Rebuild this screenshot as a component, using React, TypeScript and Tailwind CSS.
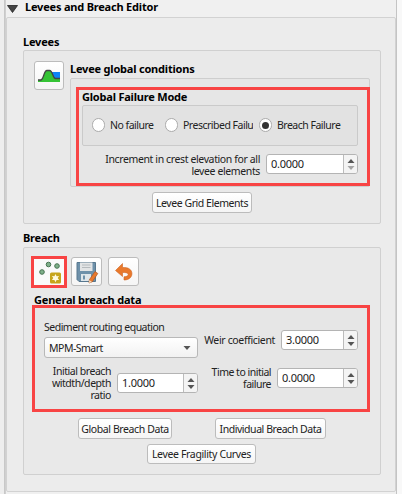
import type { ReactNode } from "react";

function Spin({ value, className, dimDown = false }: { value: string; className: string; dimDown?: boolean }) {
  return (
    <div className={`flex h-[20px] shrink-0 overflow-hidden rounded-[3px] border border-[#b4b4b4] bg-white text-[11px] ${className}`}>
      <span className="flex-1 pl-[4px] leading-[18px] tracking-[-0.25px]">{value}</span>
      <span className="flex w-[14px] flex-col items-center justify-center gap-[3px] border-l border-[#bcbcbc] bg-[#f4f4f4]">
        <svg width="8" height="4" viewBox="0 0 8 4"><path d="M0.5 4 4 0 7.5 4Z" fill="#555" /></svg>
        <svg width="8" height="4" viewBox="0 0 8 4"><path d="M0.5 0 4 4 7.5 0Z" fill={dimDown ? "#a5a5a5" : "#555"} /></svg>
      </span>
    </div>
  );
}

function Button({ children, className }: { children: ReactNode; className: string }) {
  return (
    <button className={`flex shrink-0 items-center justify-center rounded-[3px] border border-[#bcbcbc] bg-gradient-to-b from-white to-[#f5f5f5] ${className}`}>
      {children}
    </button>
  );
}

function Radio({ label, checked = false, className }: { label: string; checked?: boolean; className: string }) {
  return (
    <label className={`flex items-center gap-[5px] overflow-hidden ${className}`}>
      <span className="flex h-[14px] w-[13px] shrink-0 items-center justify-center rounded-full border border-[#aaa] bg-white">
        {checked && <span className="h-[7px] w-[7px] rounded-full bg-[#333]" />}
      </span>
      {label}
    </label>
  );
}

function LeveeIcon() {
  return (
    <svg width="24" height="14" viewBox="0 0 24 14">
      <path d="M14 3H23V10H17Z" fill="#0d83f5" />
      <path d="M1 13V11H4C7 11 6.500 1.500 10 1.500H12.500C16 1.500 15.500 9.500 18.500 9.500H23V13Z" fill="#35c335" />
      <path d="M1 11H3.500C7 11 6.500 1.500 10 1.500H12.500C16 1.500 15.500 9.500 18.500 9.500H23" fill="none" stroke="#444" strokeWidth="1.3" />
    </svg>
  );
}

function PointsIcon() {
  return (
    <svg width="30" height="26" viewBox="0 0 30 26" className="shrink-0">
      <g fill="#7fb08a" stroke="#477351" strokeWidth="1">
        <circle cx="8" cy="13" r="2.3" />
        <circle cx="14.5" cy="5.500" r="2.3" />
        <circle cx="23" cy="7" r="2.3" />
      </g>
      <rect x="16" y="13.500" width="11" height="11" rx="1.5" fill="#c7a51b" />
      <path d="m21.5 15 1.1 2.3 2.5-.3-1.4 2 1.4 2.1-2.5-.2-1.1 2.3-1.1-2.3-2.5.2 1.4-2.1-1.4-2 2.5.3Z" fill="#fffbe0" />
    </svg>
  );
}

function SaveIcon() {
  return (
    <svg width="24" height="24" viewBox="0 0 24 24">
      <path d="M2 2.5H20.500V21.500H4L2 19.500Z" fill="#6e91aa" stroke="#58788f" />
      <rect x="5" y="2.500" width="12.500" height="8.500" fill="#e2e4e5" />
      <path d="M7 5H15.500M7 7.500H15.500" stroke="#b5babd" />
      <rect x="6" y="14" width="10" height="7" fill="#dfe6ea" />
      <rect x="8" y="15.500" width="2" height="4" fill="#6e91aa" />
      <path d="M20 11.500 22.800 13.500 17.300 21.800 14 23 14.300 19.800Z" fill="#e9792c" stroke="#a9572a" strokeWidth=".7" />
      <path d="m14.300 20 2.700 1.900-3 1.200Z" fill="#f3ddc1" />
    </svg>
  );
}

function UndoIcon() {
  return (
    <svg width="20" height="20" viewBox="0 0 20 20">
      <path d="M1.500 8.500 8.500 1.500V5.500H10.500C20.500 5.500 20.500 18 10 18V14.800C15.500 14.800 15.500 10.500 10.500 10.500H8.500V14.500Z" fill="#e9792c" stroke="#ce6523" strokeWidth=".6" />
    </svg>
  );
}

export default function App() {
  return (
    <main className="flex h-[494px] w-[402px] overflow-hidden bg-[#f0f0f0] font-['Noto_Sans','Open_Sans',sans-serif] text-[10.5px] leading-[12px] tracking-[-0.5px] whitespace-nowrap text-[#222]">
      <div className="w-[6px] shrink-0 border-r border-[#d0d0d0] bg-[#eee] pl-[4px]">
        <div className="h-full w-px bg-[#c8c8c8]" />
      </div>
      <section className="w-[391px] shrink-0 border-r border-[#c4c4c4]">
        <h1 className="flex h-[17px] items-center pl-[1px] text-[11px] font-bold tracking-[-0.2px] text-black">
          <svg width="11" height="8" viewBox="0 0 11 8" className="mt-px mr-[7px]"><path d="M.5 .5H10.500L5.500 7.500Z" fill="#444" stroke="#222" strokeWidth=".8" /></svg>
          <span className="-mt-[3px]">Levees and Breach Editor</span>
        </h1>
        <div className="h-[475px] rounded-[2px] border border-[#d2d2d2] bg-[#ececec] pt-[17px] pl-[16px]">
          <h2 className="h-[15px] text-[11px] leading-[13px] font-bold tracking-[-0.2px] text-black">Levees</h2>
          <div className="h-[174px] w-[358px] rounded-[2px] border border-[#d0d0d0] bg-[#e9e9e9] pt-[10px]">
            <div className="flex">
              <Button className="ml-[10px] h-[29px] w-[30px]"><LeveeIcon /></Button>
              <div className="pl-[6px]">
                <h3 className="h-[17px] text-[11px] leading-[15px] font-bold tracking-[-0.2px] text-black">Levee global conditions</h3>
                <div className="h-[109px] w-[300px] rounded-[2px] border border-[#cecece] bg-[#e6e6e6] pt-[8px] pl-[5px]">
                  <div className="h-[99px] w-[294px] border-[3px] border-[#f84444] pl-[3px]">
                    <h4 className="h-[15px] text-[11px] leading-[13px] font-bold tracking-[-0.2px] text-black">Global Failure Mode</h4>
                    <div className="flex h-[41px] w-[276px] items-center rounded-[2px] border border-[#cacaca] bg-[#e2e2e2] pb-px pl-[9px]">
                      <Radio label="No failure" className="w-[73px]" />
                      <Radio label="Prescribed Failure" className="w-[88px]" />
                      <Radio label="Breach Failure" checked className="ml-[6px] w-[90px]" />
                    </div>
                    <div className="flex pt-[7px]">
                      <p className="w-[178px] text-right tracking-[-0.38px]">Increment in crest elevation for all<br />levee elements</p>
                      <Spin value="0.0000" dimDown className="mt-px ml-[6px] w-[92px]" />
                    </div>
                  </div>
                </div>
              </div>
            </div>
            <Button className="mt-[5px] ml-[128px] h-[21px] w-[100px] tracking-[-0.45px]">Levee Grid Elements</Button>
          </div>
          <h2 className="h-[23px] pt-[7px] text-[11px] leading-[13px] font-bold tracking-[-0.2px] text-black">Breach</h2>
          <div className="h-[228px] w-[358px] rounded-[2px] border border-[#d0d0d0] bg-[#e9e9e9] pt-[8px] pl-[8px]">
            <div className="flex items-start">
              <div className="-ml-px flex h-[32px] w-[36px] items-center justify-center border-[3px] border-[#f84444] bg-[#fafafa]"><PointsIcon /></div>
              <Button className="mt-px ml-[4px] h-[29px] w-[31px]"><SaveIcon /></Button>
              <Button className="mt-px ml-[6px] h-[29px] w-[31px]"><UndoIcon /></Button>
            </div>
            <h3 className="h-[17px] pt-[4px] pl-[2px] text-[11px] leading-[15px] font-bold tracking-[-0.2px] text-black">General breach data</h3>
            <div className="h-[107px] w-[338px] border-[3px] border-[#f84444] bg-[#e6e6e6] pt-[13px] pl-[9px]">
              <div className="flex h-[88px]">
                <div className="w-[154px]">
                  <p className="h-[16px]">Sediment routing equation</p>
                  <div className="flex h-[21px] items-center justify-between rounded-[3px] border border-[#b8b8b8] bg-gradient-to-b from-white to-[#f2f2f2] pr-[6px] pl-[4px]">
                    MPM-Smart
                    <svg width="8" height="4" viewBox="0 0 8 4"><path d="M.5 0H7.500L4 4Z" fill="#555" /></svg>
                  </div>
                  <div className="flex pt-[7px]">
                    <p className="w-[67px] text-right tracking-[-0.45px]">Initial breach<br />witdth/depth<br />ratio</p>
                    <Spin value="1.0000" className="mt-[8px] ml-[6px] w-[81px]" />
                  </div>
                </div>
                <div className="flex w-[160px] flex-col items-end pt-[9px]">
                  <div className="flex items-center gap-[6px]"><span className="tracking-[-0.35px]">Weir coefficient</span><Spin value="3.0000" className="w-[77px]" /></div>
                  <div className="mt-[16px] flex items-center gap-[6px]"><p className="text-right">Time to initial<br />failure</p><Spin value="0.0000" className="w-[81px]" /></div>
                </div>
              </div>
            </div>
            <div className="flex pt-[6px] pl-[46px] tracking-[-0.4px]">
              <Button className="h-[21px] w-[94px] tracking-[-0.4px]">Global Breach Data</Button>
              <Button className="ml-[43px] h-[21px] w-[111px] tracking-[-0.45px]">Individual Breach Data</Button>
            </div>
            <Button className="mt-[5px] ml-[115px] h-[20px] w-[109px] tracking-[-0.35px]">Levee Fragility Curves</Button>
          </div>
        </div>
      </section>
      <div className="flex-1 bg-[#f8f8f8]" />
    </main>
  );
}
